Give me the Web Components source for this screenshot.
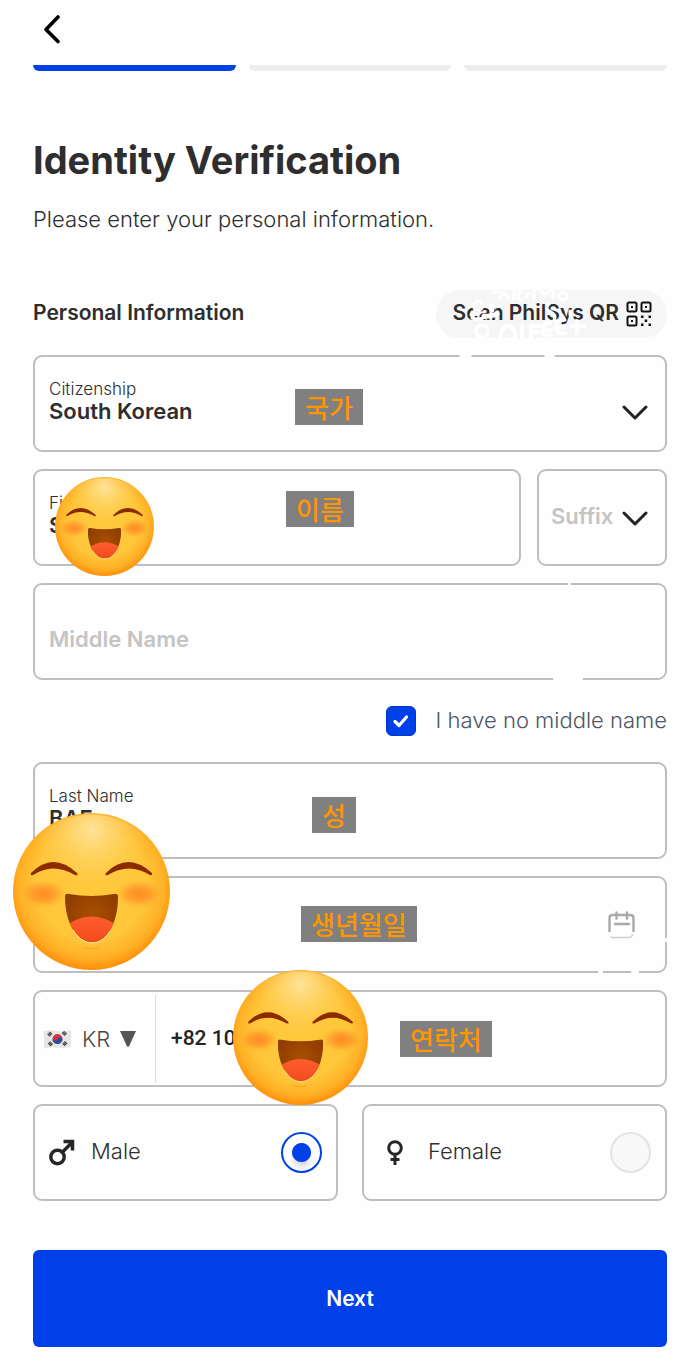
<!DOCTYPE html>
<html lang="en">
<head>
<meta charset="utf-8">
<meta name="viewport" content="width=device-width, initial-scale=1">
<title>Identity Verification</title>
<style>
  body {
    margin: 0;
    background: #fefefe;
    color: #2e2e2e;
    font-family: Inter, "Noto Sans CJK KR", sans-serif;
    --blue: #0040e8;
    --line: #bebebe;
    --muted: #c4c4c4;
    --gap: 17px;
  }
</style>
</head>
<body>
<verification-page></verification-page>

<script>
const define = (name, html, setup) => {
  const template = document.createElement('template');
  template.innerHTML = html;
  customElements.define(name, class extends HTMLElement {
    constructor() {
      super();
      this.attachShadow({ mode: 'open' });
    }
    connectedCallback() {
      if (this.shadowRoot.childNodes.length) return;
      this.shadowRoot.append(template.content.cloneNode(true));
      if (setup) setup(this, this.shadowRoot);
    }
  });
};

const boxCss = `
  *, *::before { box-sizing: border-box; }
  .box {
    display: flex; align-items: center;
    height: 97px; border: 2px solid var(--line); border-radius: 9px;
    background: #fefefe;
  }
  input, select, button { font: inherit; color: inherit; margin: 0; border: 0; background: none; padding: 0; min-width: 0; }
`;

const chevron = `<svg class="chevron" width="26" height="16" viewBox="0 0 26 16" fill="none" stroke="#222" stroke-width="3" stroke-linecap="round" stroke-linejoin="round" aria-hidden="true"><path d="M2 3 L13 14 L24 3"/></svg>`;

/* Top bar with the back button */
define('top-bar', `
  <style>
    :host { display: flex; align-items: center; height: 65px; }
    button { width: 38px; height: 40px; padding: 0; border: 0; background: none; display: grid; place-items: center; margin-bottom: 8px; }
  </style>
  <button type="button" aria-label="Back">
    <svg width="20" height="30" viewBox="0 0 20 30" fill="none" stroke="#000" stroke-width="3.600" stroke-linecap="round" stroke-linejoin="round"><path d="M16 3 L4 15.500 L16 27.500"/></svg>
  </button>
`);

/* Three step progress */
define('step-progress', `
  <style>
    :host { display: grid; grid-template-columns: repeat(3, 1fr); gap: 13px; }
    span { height: 6px; border-radius: 0 0 6px 6px; background: #ededed; }
    span.done { background: var(--blue); }
  </style>
  <span class="done"></span><span></span><span></span>
`);

/* Heading of the form section, with the QR action */
define('section-head', `
  <style>
    :host { display: flex; align-items: center; justify-content: space-between; position: relative; }
    h2 { margin: 0; font-size: 21px; line-height: 28px; font-weight: 600; padding-bottom: 2px; }
    button {
      display: flex; align-items: center; gap: 7px; height: 48px; padding: 0 15px 0 17px;
      border: 0; border-radius: 24px; background: #f6f6f6; color: inherit;
      font: 600 21px/28px Inter, sans-serif;
    }
    button span { padding-bottom: 2px; }
    .mark { position: absolute; right: -3px; top: -10px; z-index: 1; pointer-events: none; }
  </style>
  <h2>Personal Information</h2>
  <button type="button"><span>Scan PhilSys QR</span>
    <svg width="26" height="26" viewBox="0 0 26 26" aria-hidden="true">
      <g fill="none" stroke="#111" stroke-width="2"><rect x="1.500" y="1.500" width="9" height="9" rx="1.500"/><rect x="15.500" y="1.500" width="9" height="9" rx="1.500"/><rect x="1.500" y="15.500" width="9" height="9" rx="1.500"/></g>
      <g fill="#111"><path d="M5 5h2v2H5zM19 5h2v2h-2zM5 19h2v2H5z"/><path d="M15 14.500h2.500v2.500H15zM22.500 14.500h2.500v2.500h-2.500zM18.700 18.500h2.500v2.500h-2.500zM15 22.500h2.500V25H15zM22.500 22.500h2.500V25h-2.500z"/></g>
    </svg>
  </button>
  <svg class="mark" width="240" height="90" viewBox="430 280 240 90" fill="none" stroke="#fff" stroke-width="3" stroke-linecap="round" aria-hidden="true">
    <circle cx="478" cy="306" r="4.500"/><circle cx="482" cy="331" r="6"/><path d="M472 318q8 3 15-2M475 311l-4 4"/>
    <path d="M484 316q6 1 13-2M492 306v4" stroke-width="5"/>
    <path d="M493 292h8M504 293l-4 5M504 293l4 5M514 290v9M520 292q-5 8 2 8M526 297l4-4M534 291v8M541 291q4 6 8 0M553 290v7"/><circle cx="563" cy="296" r="4"/>
    <g stroke-width="4"><path d="M501 337q0-11 7-11t7 11M522 325v13M539 326h-8v12M532 332h6M550 323q-6-1-7 7q0 7 8 5M544 330h7M563 320q-7 0-7 7q0 8 9 6M557 327h7M577 321v12M572 326h12"/></g>
    <path d="M549 304q-5 5 2 8q6 3 3 8M562 315l3 5M570 311v4"/>
    <path d="M461 355h6M469 355h1M546 355h7" stroke-width="4"/>
  </svg>
`);

/* White speck that interrupts a field's outline */
define('line-gap', `
  <style>
    :host { position: absolute; right: var(--x); top: var(--y); width: var(--w); height: 4px; border-radius: 2px; background: #fefefe; }
  </style>
`);

/* Orange-on-grey caption laid over a field */
define('note-tag', `
  <style>
    :host {
      position: absolute; left: var(--x); top: var(--y); z-index: 2;
      padding: 0 10px; background: #808080; color: #ff9500;
      font-size: 26px; line-height: 36px; font-weight: 500; font-family: "Noto Sans CJK KR", sans-serif;
      white-space: nowrap;
    }
  </style>
  <slot></slot>
`);

/* Laughing face sticker */
define('laugh-sticker', `
  <style>
    :host { position: absolute; left: var(--x); top: var(--y); width: var(--size); height: var(--size); z-index: 3; }
    svg { display: block; width: 100%; height: 100%; }
  </style>
  <svg viewBox="0 0 157 157" role="img" aria-label="Laughing face">
    <defs>
      <radialGradient id="face" cx=".5" cy=".46" r=".54"><stop offset="0" stop-color="#ffc93c"/><stop offset=".65" stop-color="#ffc63a"/><stop offset=".86" stop-color="#ffb126"/><stop offset="1" stop-color="#ff8f0a"/></radialGradient>
      <radialGradient id="shine" cx=".5" cy=".1" r=".38"><stop offset="0" stop-color="#ffe39a"/><stop offset="1" stop-color="#ffd25a" stop-opacity="0"/></radialGradient>
      <radialGradient id="blush"><stop offset="0" stop-color="#ff8420" stop-opacity=".9"/><stop offset=".5" stop-color="#ff8d25" stop-opacity=".65"/><stop offset="1" stop-color="#ff9d2b" stop-opacity="0"/></radialGradient>
      <radialGradient id="mouth" cy=".45"><stop offset="0" stop-color="#a94f00"/><stop offset="1" stop-color="#8f3d00"/></radialGradient>
      <linearGradient id="tongue" x2="0" y2="1"><stop offset="0" stop-color="#ff5d30"/><stop offset="1" stop-color="#f04a18"/></linearGradient>
      <clipPath id="lips"><path d="M52 84q0-4 4-3q22 4 45 0q4-1 4 3c0 26-11 45-26 45s-27-19-27-45z"/></clipPath>
    </defs>
    <circle cx="78.500" cy="78.500" r="78.500" fill="url(#face)"/><circle cx="78.500" cy="78.500" r="77" fill="url(#shine)"/>
    <ellipse cx="30" cy="81" rx="23" ry="14" fill="url(#blush)"/><ellipse cx="126" cy="81" rx="23" ry="14" fill="url(#blush)"/>
    <path d="M18 60q22-22 46 0q2 3-2 2q-22-13-42 0q-3 1-2-2zM93 60q22-22 46 0q1 3-2 2q-21-13-42 0q-4 1-2-2z" fill="#8d2b00"/>
    <g clip-path="url(#lips)"><path d="M50 78h58v54H50z" fill="url(#mouth)"/><path d="M54 112q24-17 50 0v20H54z" fill="url(#tongue)"/></g>
    <path d="M60 117q8 13 19 13t19-13" fill="none" stroke="#ffe0a0" stroke-width="1"/>
    <path d="M71 134q8 4 15 0" fill="none" stroke="#ffa21b" stroke-width="1"/>
  </svg>
`);

/* Text input with a caption above its value */
define('text-field', `
  <style>
    ${boxCss}
    :host { display: block; position: relative; }
    .box { padding: 0 30px 0 14px; }
    .stack { display: flex; flex-direction: column; flex: 1; min-width: 0; padding-bottom: 8px; }
    label { font-size: 17px; line-height: 22px; min-height: 22px; font-weight: 300; }
    input { font-size: 22px; line-height: 22px; height: 22px; font-weight: 600; width: 100%; outline: 0; }
    input::placeholder { color: var(--muted); opacity: 1; }
  </style>
  <div class="box"><div class="stack"><label for="control"></label><input id="control" type="text"></div><slot name="end"></slot></div>
  <slot></slot>
`, (host, root) => {
  const input = root.querySelector('input');
  root.querySelector('label').textContent = host.getAttribute('label') || '';
  input.value = host.getAttribute('value') || '';
  if (host.hasAttribute('placeholder')) input.placeholder = host.getAttribute('placeholder');
  if (host.hasAttribute('name')) input.setAttribute('aria-label', host.getAttribute('name'));
});

/* Drop-down with or without a caption */
define('select-field', `
  <style>
    ${boxCss}
    :host { display: block; position: relative; }
    .box { padding: 0 17px 0 14px; }
    .stack { display: flex; flex-direction: column; flex: 1; min-width: 0; padding-bottom: 8px; }
    label { font-size: 17px; line-height: 22px; font-weight: 300; }
    select { appearance: none; font-size: 22px; line-height: 22px; height: 22px; font-weight: 600; outline: 0; width: 100%; }
    .chevron { flex: none; margin-top: 17px; }
    :host([compact]) .box { padding-left: 12px; }
    :host([compact]) .stack { padding-bottom: 4px; }
    :host([compact]) label { display: none; }
    :host([compact]) select { color: var(--muted); height: 28px; line-height: 28px; }
    :host([compact]) .chevron { margin-top: 0; }
  </style>
  <div class="box"><div class="stack"><label for="control"></label><select id="control"><option></option></select></div>${chevron}</div>
  <slot></slot>
`, (host, root) => {
  root.querySelector('label').textContent = host.getAttribute('label');
  root.querySelector('option').textContent = host.getAttribute('value');
  root.querySelector('select').setAttribute('aria-label', host.getAttribute('label'));
});

define('calendar-button', `
  <style>
    :host { display: flex; }
    button { border: 0; padding: 0; background: none; display: flex; }
  </style>
  <button type="button" aria-label="Pick a date">
    <svg width="27" height="28" viewBox="0 0 27 28" fill="none" stroke="#a9a9a9" stroke-width="2.400" stroke-linecap="round">
      <path d="M1.500 20V7q0-3 3-3h18q3 0 3 3v13M8.500 1.500v6M19 1.500v6M7 13h14"/>
      <path d="M3 26q1 1 4 .500h13q4 0 4.500-3" stroke="#cfcfcf" stroke-width="1.500"/>
    </svg>
  </button>
`);

/* Confirmation tick box */
define('check-row', `
  <style>
    :host { display: flex; justify-content: flex-end; }
    label { display: flex; align-items: center; gap: 20px; font-size: 22px; line-height: 28px; font-weight: 300; color: #4d5666; }
    label > :last-child { padding-bottom: 2px; }
    .tick { display: grid; width: 30px; height: 30px; }
    .tick > * { grid-area: 1 / 1; }
    input { appearance: none; margin: 0; width: 30px; height: 30px; border-radius: 6px; border: 1px solid var(--line); }
    input:checked { background: var(--blue); border-color: #0037cf; }
    svg { pointer-events: none; }
  </style>
  <label><span class="tick"><input type="checkbox" checked><svg width="30" height="30" viewBox="0 0 30 30" fill="none" stroke="#fff" stroke-width="3.200" stroke-linecap="round" stroke-linejoin="round" aria-hidden="true"><path d="M9 15.500l4 4 7.500-8.500"/></svg></span><span><slot></slot></span></label>
`);

define('phone-field', `
  <style>
    ${boxCss}
    :host { display: block; position: relative; }
    .box { padding: 2px; gap: 15px; }
    button { display: flex; align-items: center; height: 88px; width: 119px; padding-left: 7px; border-right: 1px solid #dcdcdc; font-size: 22px; line-height: 28px; color: #484848; }
    .code { margin: 0 9px 0 10px; width: 30px; font-weight: 300; }
    input { flex: 1; height: 28px; font: 500 21px/28px Roboto, sans-serif; outline: 0; color: #222; margin-bottom: 2px; }
  </style>
  <div class="box">
    <button type="button" aria-label="Country code">
      <svg width="27" height="20" viewBox="0 0 27 20" aria-hidden="true">
        <path d="M0 2q7-1.500 13 0t14-1v17q-7 1.500-14 .5T0 19.500z" fill="#e6e6e6"/>
        <g transform="rotate(25 13.500 10)"><circle cx="13.500" cy="10" r="5" fill="#cf3145"/><path d="M8.500 10a5 5 0 0 0 10 0a2.500 2.500 0 0 0-5 0a2.500 2.500 0 0 1-5 0z" fill="#2650a0"/></g>
        <g stroke="#333" stroke-width="3.600" stroke-dasharray="1 .4"><path d="M4.500 6.500l3-3M19 3l3 3M5 13.500l3 3M19.500 16l3-3"/></g>
      </svg>
      <span class="code">KR</span>
      <svg width="16" height="16" viewBox="0 0 16 16" aria-hidden="true"><path d="M0 0h16L9 15.500H7z" fill="#555"/></svg>
    </button>
    <input type="tel" value="+82 10" aria-label="Mobile number">
  </div>
  <slot></slot>
`);

/* Male / female radio pair */
define('gender-picker', `
  <style>
    ${boxCss}
    :host { display: grid; grid-template-columns: 1fr 1fr; gap: 24px; }
    .box { padding: 0 14px; gap: 16px; font-size: 22px; line-height: 28px; font-weight: 300; }
    .name { flex: 1; padding-bottom: 3px; }
    input { appearance: none; width: 41px; height: 41px; border-radius: 50%; border: 2px solid #e3e3e3; background: #f8f8f8; }
    input:checked { border-color: var(--blue); background: radial-gradient(circle at 50% 50%, var(--blue) 9px, transparent 10px), radial-gradient(circle at 50% 68%, #dcdcdc 4px, #fefefe 12px); }
  </style>
  <label class="box">
    <svg width="26" height="27" viewBox="0 0 26 27" fill="none" stroke="#262626" stroke-width="3.500" aria-hidden="true"><circle cx="8.500" cy="18" r="6.700"/><path d="M13.500 13l9-9M14.500 2.500h9v9"/></svg>
    <span class="name">Male</span><input type="radio" name="gender" checked>
  </label>
  <label class="box">
    <svg width="34" height="26" viewBox="0 0 34 26" fill="none" stroke="#262626" stroke-width="3" aria-hidden="true"><circle cx="17" cy="8" r="6.300"/><path d="M17 14v11M12.500 19.500h9"/></svg>
    <span class="name">Female</span><input type="radio" name="gender">
  </label>
`);

define('primary-button', `
  <style>
    :host { display: block; }
    button { width: 100%; height: 97px; border: 0; border-radius: 6px; background: var(--blue); color: #fff; font: 600 21px/28px Inter, sans-serif; padding: 0; }
  </style>
  <button type="button"><slot></slot></button>
`);

define('verification-page', `
  <style>
    :host { display: block; padding: 0 33px 22px; }
    h1 { margin: 67px 0 0; font-size: 38px; line-height: 44px; font-weight: 700; }
    p { margin: 23px 0 0; font-size: 22px; line-height: 28px; font-weight: 300; }
    section-head { margin-top: 57px; }
    form { display: grid; grid-template-columns: minmax(0, 1fr); gap: var(--gap); margin-top: var(--gap); }
    .pair { display: grid; grid-template-columns: minmax(0, 1fr) 130px; gap: 16px; }
    check-row { margin: 9px 0; }
    primary-button { margin-top: 32px; }
  </style>
  <top-bar></top-bar>
  <step-progress></step-progress>
  <h1>Identity Verification</h1>
  <p>Please enter your personal information.</p>
  <section-head></section-head>
  <form>
    <select-field label="Citizenship" value="South Korean"><note-tag style="--x:262px;--y:34px">국가</note-tag></select-field>
    <div class="pair">
      <text-field label="First Name" value="S"><note-tag style="--x:253px;--y:22px">이름</note-tag><laugh-sticker style="--x:22px;--y:8px;--size:99px"></laugh-sticker></text-field>
      <select-field compact label="Suffix" value="Suffix"></select-field>
    </div>
    <text-field placeholder="Middle Name" name="Middle Name"><line-gap style="--x:96px;--y:-1px;--w:3px"></line-gap><line-gap style="--x:84px;--y:94px;--w:30px"></line-gap></text-field>
    <check-row>I have no middle name</check-row>
    <text-field label="Last Name" value="BAE"><note-tag style="--x:279px;--y:35px">성</note-tag><laugh-sticker style="--x:-20px;--y:51px;--size:157px"></laugh-sticker></text-field>
    <text-field name="Date of birth"><calendar-button slot="end"></calendar-button><line-gap style="--x:64px;--y:94px;--w:5px"></line-gap><line-gap style="--x:28px;--y:94px;--w:8px"></line-gap><line-gap style="--x:-1px;--y:62px;--w:4px"></line-gap><note-tag style="--x:268px;--y:30px">생년월일</note-tag></text-field>
    <phone-field><note-tag style="--x:367px;--y:31px">연락처</note-tag><laugh-sticker style="--x:200px;--y:-20px;--size:135px"></laugh-sticker></phone-field>
    <gender-picker></gender-picker>
    <primary-button>Next</primary-button>
  </form>
`);
</script>
</body>
</html>
